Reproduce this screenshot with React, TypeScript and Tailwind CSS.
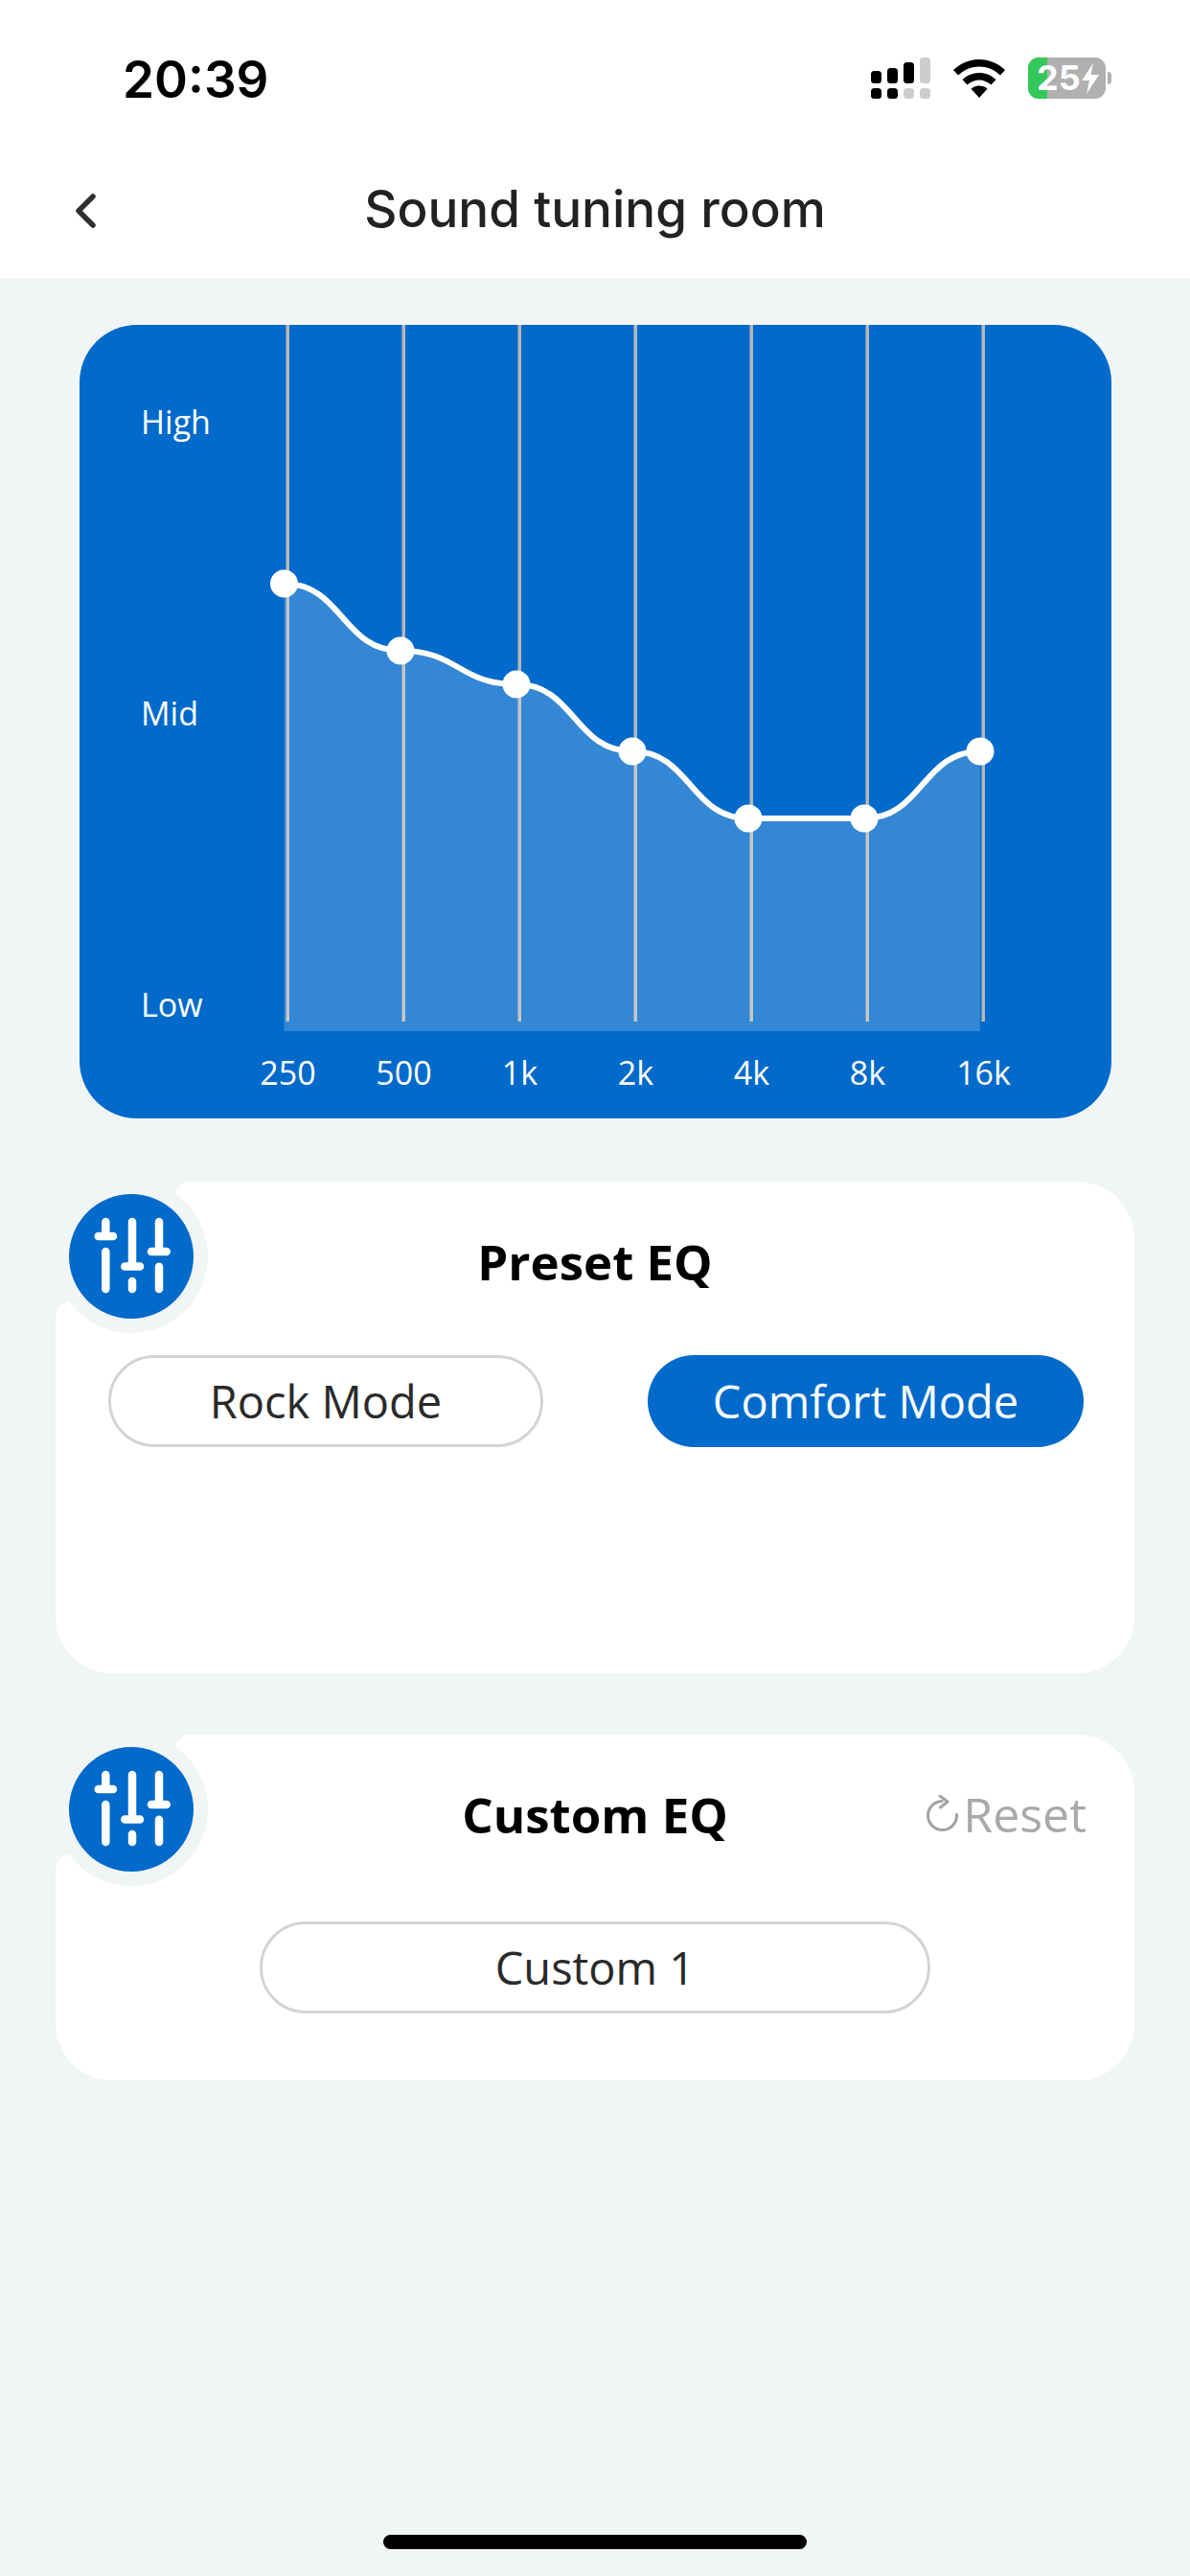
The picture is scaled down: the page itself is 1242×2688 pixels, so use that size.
import React from 'react';

const LINES = [20, 141, 262, 383, 504, 625, 746];
const POINTS: [number, number][] = [
  [16.5, 270],
  [138, 340],
  [259, 375],
  [380, 445],
  [501, 515],
  [622, 515],
  [743, 445],
];
const FREQS = ['250', '500', '1k', '2k', '4k', '8k', '16k'];

function curvePath() {
  let d = `M${POINTS[0][0]} ${POINTS[0][1]}`;
  for (let i = 1; i < POINTS.length; i++) {
    const [x0, y0] = POINTS[i - 1];
    const [x1, y1] = POINTS[i];
    const mid = (x0 + x1) / 2;
    d += ` C${mid} ${y0} ${mid} ${y1} ${x1} ${y1}`;
  }
  return d;
}

function StatusBar() {
  return (
    <div className="flex h-[160px] items-start justify-between bg-white">
      <span className="ml-[128px] mt-[53px] font-['Inter',sans-serif] text-[53px] leading-[60px] font-semibold text-black">20:39</span>
      <div className="mr-[82px] mt-[60px] flex items-start">
        <svg width="62" height="44" viewBox="0 0 62 44" className="block">
          <rect x="0" y="14" width="11" height="13" rx="3.5" fill="#000" />
          <rect x="17" y="11" width="11" height="16" rx="3.5" fill="#000" />
          <rect x="34" y="5" width="11" height="22" rx="3.5" fill="#000" />
          <rect x="51" y="0" width="11" height="27" rx="3.5" fill="#cccccc" />
          <rect x="0" y="32" width="11" height="11" rx="3.5" fill="#000" />
          <rect x="17" y="32" width="11" height="11" rx="3.5" fill="#000" />
          <rect x="34" y="32" width="11" height="11" rx="3.5" fill="#cccccc" />
          <rect x="51" y="32" width="11" height="11" rx="3.5" fill="#cccccc" />
        </svg>
        <svg width="54" height="40" viewBox="0 0 54 40" className="ml-[24px] mt-[2px] block">
          <path d="M27 0C16.5 0 7.5 4 0 11l5 5.500C11.500 10.500 19 7.500 27 7.500S42.500 10.500 49 16.500L54 11C46.500 4 37.500 0 27 0Z" fill="#000" />
          <path d="M27 14C20.500 14 14.500 16.500 9.500 21L14.500 26.500C18 23.500 22.500 21.500 27 21.500S36 23.500 39.500 26.500L44.500 21C39.500 16.500 33.500 14 27 14Z" fill="#000" />
          <path d="M27 27.500C23.800 27.500 20.800 28.700 18.500 30.700L27 40L35.500 30.700C33.200 28.700 30.200 27.500 27 27.500Z" fill="#000" />
        </svg>
        <div className="ml-[24px] flex items-center">
          <div className="relative flex h-[43px] w-[81px] items-center overflow-hidden rounded-[11px] bg-[#b0b0b0]">
            <div className="h-full w-[20px] bg-[#34c759]" />
            <div className="absolute inset-0 flex items-center pl-[9px]">
              <span className="font-['Inter',sans-serif] text-[36px] leading-[43px] font-bold text-white">25</span>
              <svg width="18" height="32" viewBox="0 0 18 32" className="ml-[1px] block">
                <path d="M12 0L0 18H8L5 32L18 12H9.500Z" fill="#fff" />
              </svg>
            </div>
          </div>
          <div className="ml-[2px] h-[13px] w-[4px] rounded-r-full bg-[#b0b0b0]" />
        </div>
      </div>
    </div>
  );
}

function SliderIcon() {
  return (
    <svg width="130" height="130" viewBox="0 0 130 130" className="block">
      <circle cx="65" cy="65" r="65" fill="#016aca" />
      <g stroke="#fff" strokeWidth="8.500" strokeLinecap="round" fill="none">
        <path d="M38.300 29V44M30.700 44H46M38.300 60V99" />
        <path d="M66 29V75.500M58.300 75.500H74M66 91V99" />
        <path d="M94 29V60M86 60H101.700M94 75.700V99" />
      </g>
    </svg>
  );
}

function EqCard({ title, height, children, action }: { title: string; height: string; children: React.ReactNode; action?: React.ReactNode }) {
  return (
    <section className={`relative ml-[58px] w-[1126px] ${height}`}>
      {/* notched card shape, two overlapping white blocks */}
      <div className="absolute top-0 right-0 bottom-0 left-[125px] rounded-tl-[16px] rounded-r-[60px] bg-white" />
      <div className="absolute top-[125px] right-0 bottom-0 left-0 rounded-tl-[16px] rounded-b-[60px] bg-white" />
      <div className="absolute -top-[2px] -left-[1px] rounded-full bg-[#f1f5f6] p-[15px]">
        <SliderIcon />
      </div>
      <div className="relative">
        <div className="grid h-[166px] grid-cols-[1fr_auto_1fr] items-center">
          <span />
          <h2 className="text-[51px] leading-[60px] font-bold text-black">{title}</h2>
          {action}
        </div>
        {children}
      </div>
    </section>
  );
}

export default function App() {
  return (
    <div className="flex h-[2688px] w-[1242px] flex-col overflow-hidden bg-[#f1f5f6] font-['Open_Sans','Noto_Sans',sans-serif]">
      <StatusBar />
      <header className="relative flex h-[130px] items-center justify-center bg-white pb-[14px] font-['Inter',sans-serif]">
        <svg width="30" height="40" viewBox="0 0 30 40" className="absolute top-[40px] left-[74px]">
          <path d="M23 5L8 20L23 35" stroke="#2f2f2f" strokeWidth="5.500" strokeLinecap="round" strokeLinejoin="round" fill="none" />
        </svg>
        <h1 className="text-[53px] leading-[60px] font-medium text-[#222]">Sound tuning room</h1>
      </header>

      <main className="flex flex-1 flex-col pt-[49px]">
        <section className="ml-[83px] h-[828px] w-[1077px] overflow-hidden rounded-[60px] bg-[#016aca] text-white">
          <div className="flex h-[737px]">
            <div className="flex w-[197px] flex-col pl-[64px] text-[34px] leading-[46px]">
              <span className="mt-[78px]">High</span>
              <span className="mt-[258px]">Mid</span>
              <span className="mt-[258px]">Low</span>
            </div>
            <svg width="780" height="737" viewBox="0 0 780 737" className="block">
              {LINES.map((x) => (
                <rect key={x} x={x - 1.5} y="0" width="3.500" height="727" fill="#b8b8b8" />
              ))}
              <path d={`${curvePath()} L743 737 L16.500 737 Z`} fill="#fff" fillOpacity="0.2" />
              <path d={curvePath()} stroke="#fff" strokeWidth="6" fill="none" />
              {POINTS.map(([x, y]) => (
                <circle key={x} cx={x} cy={y} r="14.500" fill="#fff" />
              ))}
            </svg>
          </div>
          <div className="mt-[20px] ml-[157px] flex text-[34px] leading-[46px]">
            {FREQS.map((f) => (
              <span key={f} className="w-[121px] text-center">{f}</span>
            ))}
          </div>
        </section>

        <div className="mt-[66px]">
          <EqCard title="Preset EQ" height="h-[513px]">
            <div className="mt-[15px] flex justify-between pr-[53px] pl-[55px] text-[47px]">
              <button className="h-[96px] w-[454px] rounded-full border-[3px] border-[#d4d4d4] text-[#2a2a2a]">Rock Mode</button>
              <button className="h-[96px] w-[455px] rounded-full bg-[#016aca] text-white">Comfort Mode</button>
            </div>
          </EqCard>
        </div>

        <div className="mt-[64px]">
          <EqCard
            title="Custom EQ"
            height="h-[361px]"
            action={
              <div className="flex items-center justify-self-end pr-[50px] text-[50px] leading-[60px] text-[#a9a9a9]">
                <svg width="36" height="40" viewBox="0 0 36 40" className="mr-[3px] block">
                  <path d="M32.500 20.500A15 15 0 1 1 17 6.500" stroke="#a3a3a3" strokeWidth="3" strokeLinecap="round" fill="none" />
                  <path d="M15 1L23 7L15.500 13" stroke="#a3a3a3" strokeWidth="3" strokeLinecap="round" strokeLinejoin="round" fill="none" />
                </svg>
                Reset
              </div>
            }
          >
            <div className="mt-[29px] flex justify-center text-[47px]">
              <button className="h-[96px] w-[700px] rounded-full border-[3px] border-[#d4d4d4] text-[#2a2a2a]">Custom 1</button>
            </div>
          </EqCard>
        </div>

        <div className="mt-auto mb-[28px] h-[15px] w-[442px] self-center rounded-full bg-black" />
      </main>
    </div>
  );
}
